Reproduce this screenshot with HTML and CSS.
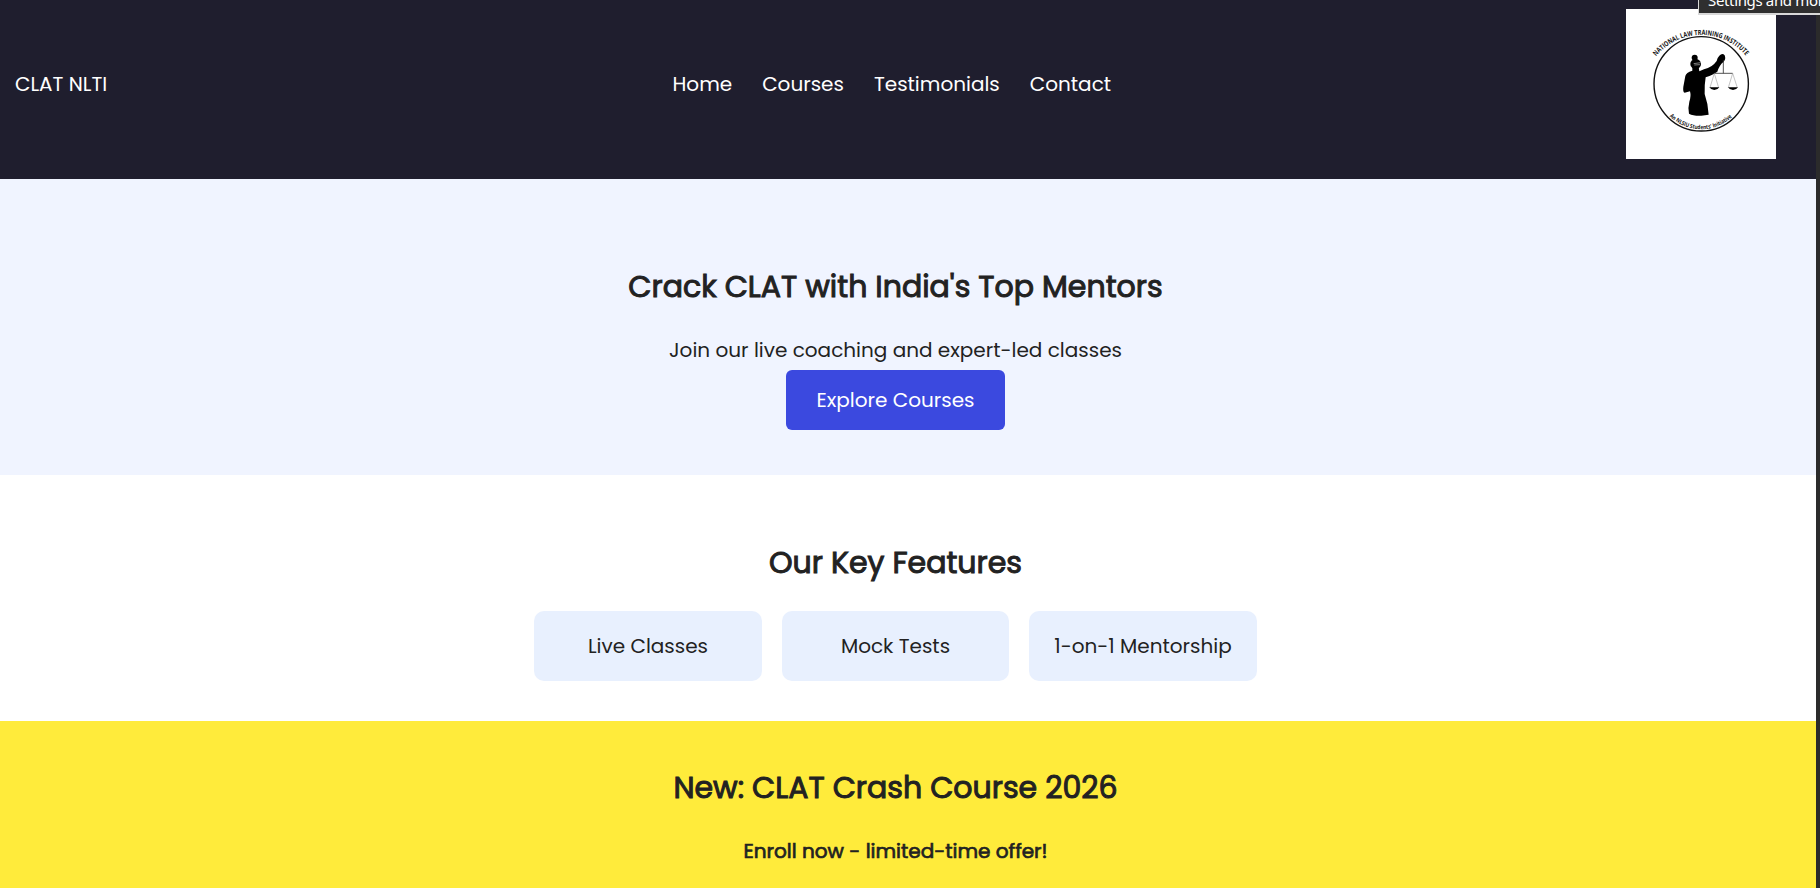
FILE: index.html
```html
<!DOCTYPE html>
<html lang="en">
<head>
<meta charset="utf-8">
<title>CLAT NLTI</title>
<link rel="stylesheet" href="styles.css">
</head>
<body>
<div class="page">
  <header class="navbar">
    <div class="brand">CLAT NLTI</div>
    <nav class="links">
      <a>Home</a>
      <a>Courses</a>
      <a>Testimonials</a>
      <a>Contact</a>
    </nav>
    <svg class="logo" viewBox="0 0 150 150">
      <defs>
        <path id="arc-top" d="M30.2 47.2A58.2 58.2 0 0 1 120.2 47.2"/>
        <path id="arc-bottom" d="M43.5 107.2A45.3 45.3 0 0 0 107 107.2"/>
      </defs>
      <rect width="150" height="150" fill="#fff"/>
      <circle cx="75.2" cy="74.8" r="47.2" fill="none" stroke="#111" stroke-width="1.4"/>
      <text class="arc-title"><textPath href="#arc-top" textLength="102" lengthAdjust="spacingAndGlyphs">NATIONAL LAW TRAINING INSTITUTE</textPath></text>
      <text class="arc-sub"><textPath href="#arc-bottom" textLength="69" lengthAdjust="spacingAndGlyphs">An NLSIU Students' Initiative</textPath></text>
      <g transform="translate(14 11) scale(.3333)">
        <circle cx="164" cy="113" r="9"/>
        <ellipse cx="167" cy="132" rx="16" ry="15"/>
        <path d="M157 140L157 152Q138 158 136 168L130 200Q128 216 134 218L150 214Q154 228 148 245Q143 265 147 281Q160 288 184 287L206 284Q204 250 194 222Q193 195 197 172Q222 163 232 155Q238 136 250 126Q259 118 254 106Q247 98 238 107Q231 114 230 123Q217 142 192 148L178 154L176 140Z"/>
        <path d="M161 131L182 128M163 135L180 134" stroke="#fff" stroke-width="1.5"/>
        <path d="M250 120V160M223 160H278" fill="none" stroke="#333" stroke-width="2.5"/>
        <path d="M223 160L210 203M223 160L236 203M278 160L265 203M278 160L292 203" fill="none" stroke="#888" stroke-width="1.5"/>
        <path d="M208 202H238Q233 210 223 210T208 202ZM264 202H294Q289 210 279 210T264 202Z"/>
      </g>
    </svg>
  </header>
  <section class="hero">
    <h2>Crack CLAT with India's Top Mentors</h2>
    <p>Join our live coaching and expert-led classes</p>
    <a class="button">Explore Courses</a>
  </section>
  <section class="features">
    <h2>Our Key Features</h2>
    <div class="cards">
      <div class="card">Live Classes</div>
      <div class="card">Mock Tests</div>
      <div class="card">1-on-1 Mentorship</div>
    </div>
  </section>
  <section class="promo">
    <h2>New: CLAT Crash Course 2026</h2>
    <p>Enroll now - limited-time offer!</p>
  </section>
</div>
<div class="window-edge"></div>
<div class="tooltip">Settings and more</div>
</body>
</html>
```

FILE: styles.css
```css
* { box-sizing: border-box; }
body {
  margin: 0;
  width: 1820px;
  height: 888px;
  overflow: hidden;
  display: flex;
  position: relative;
  font-family: Poppins, Inter, sans-serif;
  font-size: 20px;
  line-height: 30px;
  color: #222;
  background: #fff;
}
.page { width: 1816px; height: 888px; flex: none; overflow: hidden; }
.window-edge { width: 4px; background: #2b2b2b; }
.navbar {
  height: 179px;
  padding: 9px 40px 20px 15px;
  display: grid;
  grid-template-columns: 657.5px 1fr 150px;
  align-items: center;
  background: #1f1e2e;
  color: #fff;
}
.links { display: flex; gap: 30px; }
.links a { white-space: nowrap; }
.logo { width: 150px; height: 150px; display: block; }
.arc-title { font: 700 7px "Open Sans", sans-serif; fill: #111; }
.arc-sub { font: 700 5.8px "Open Sans", sans-serif; fill: #111; }
h2, p { margin: 0; }
h2 {
  font-size: 30px;
  font-weight: 400;
  line-height: 45px;
  -webkit-text-stroke: 1px #222;
}
section { padding-right: 25px; text-align: center; }
.hero { height: 296px; padding-top: 85px; background: #f0f4ff; }
.hero p { margin-top: 26px; margin-bottom: 5px; }
.button {
  display: inline-flex;
  justify-content: center;
  align-items: center;
  width: 219px;
  height: 60px;
  border-radius: 6px;
  background: #3b49df;
  color: #fff;
}
.features { height: 246px; padding-top: 65px; background: #fff; }
.cards { display: flex; justify-content: center; gap: 20px; margin-top: 26px; }
.card {
  width: 227.5px;
  height: 70px;
  border-radius: 10px;
  padding: 20px 0;
  background: #e8f0fe;
}
.promo { height: 167px; padding-top: 44px; background: #ffeb3b; }
.promo p { margin-top: 26px; -webkit-text-stroke: 0.7px #222; }
.tooltip {
  position: absolute;
  left: 1698px;
  top: -11px;
  width: 130px;
  height: 26px;
  padding-left: 9px;
  border: 1px solid #d8d8d8;
  border-bottom-width: 2px;
  background: #2f2f2f;
  color: #fff;
  font: 15px/20px "Noto Sans", "Open Sans", sans-serif;
  letter-spacing: -0.35px;
  white-space: nowrap;
}
```
